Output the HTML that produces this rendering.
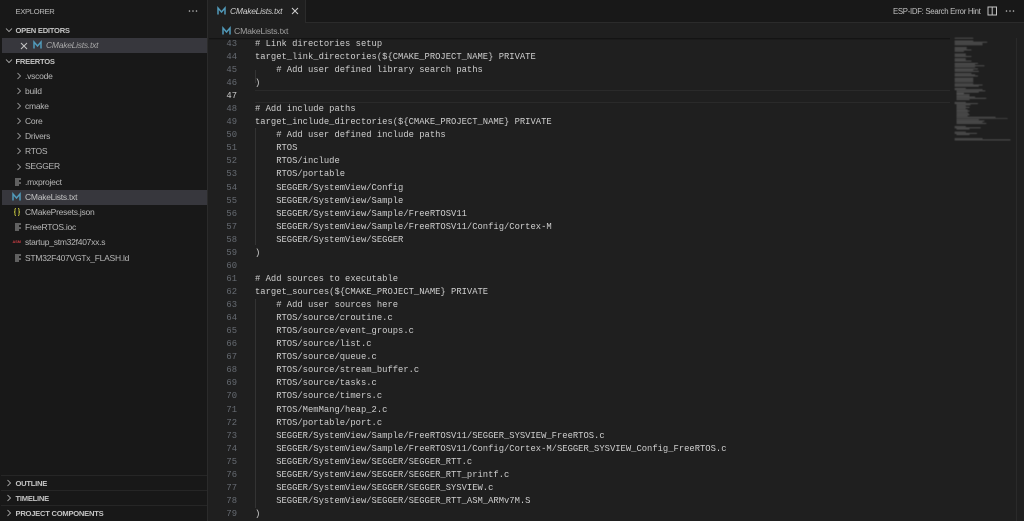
<!DOCTYPE html>
<html><head><meta charset="utf-8">
<style>
html,body{margin:0;padding:0;width:1024px;height:521px;overflow:hidden;background:#1f1f1f}
body{position:relative;font-family:"Liberation Sans",sans-serif;color:#ccc}
.a{position:absolute;white-space:pre}
#side{position:absolute;left:0;top:0;width:208px;height:521px;background:#181818;border-right:1px solid #2b2b2b;box-sizing:border-box}
.r{position:absolute;font-size:8.5px;letter-spacing:-.25px;line-height:15px;height:15px;color:#b8b8b8;white-space:pre}
.h{position:absolute;left:15.5px;font-size:7.6px;letter-spacing:-.25px;font-weight:bold;line-height:15px;height:15px;color:#c4c4c4;white-space:pre}
svg.i{position:absolute;overflow:visible}
#code{position:absolute;left:209px;top:38.4px;width:815px;height:483px;overflow:hidden}
.l{position:absolute;left:46px;font-family:"Liberation Mono",monospace;font-size:8.83px;line-height:13px;height:13px;color:#cfcfcf;white-space:pre;transform:scaleY(1.08);transform-origin:0 50%}
.n{position:absolute;left:0;width:28px;text-align:right;font-family:"Liberation Mono",monospace;font-size:8.83px;line-height:13px;height:13px;color:#666b72}
</style></head><body>
<div id="side">
<div class="a" style="left:15.5px;top:3.5px;font-size:7.600px;letter-spacing:-.3px;line-height:15px;color:#bbb">EXPLORER</div>
<svg class="i" style="left:188px;top:10px" width="10" height="3"><circle cx="1.5" cy="1" r=".8" fill="#bbb"/><circle cx="5" cy="1" r=".8" fill="#bbb"/><circle cx="8.5" cy="1" r=".8" fill="#bbb"/></svg>
<svg class="i" style="left:5px;top:27px" width="8" height="6"><path d="M1 1.5L4 4.500L7 1.500" fill="none" stroke="#bbb" stroke-width=".8"/></svg>
<div class="h" style="top:23px">OPEN EDITORS</div>
<div class="a" style="left:2px;top:38px;width:205px;height:15px;background:#37373d"></div>
<svg class="i" style="left:20px;top:42px" width="8" height="8"><path d="M1 1L7 7M7 1L1 7" stroke="#c5c5c5" stroke-width="1"/></svg>
<svg class="i" style="left:33px;top:41px" width="9" height="8"><path d="M1 7.500V1L4.500 5L8 1V7.500" fill="none" stroke="#519aba" stroke-width="1.500"/></svg>
<div class="r" style="left:46px;top:38px;font-style:italic;color:#a8a8a8">CMakeLists.txt</div>
<svg class="i" style="left:5px;top:58px" width="8" height="6"><path d="M1 1.500L4 4.500L7 1.500" fill="none" stroke="#bbb" stroke-width=".8"/></svg>
<div class="h" style="top:53.500px">FREERTOS</div>

<svg class="i" style="left:15.500px;top:72px" width="6" height="8"><path d="M1.500 1L4.500 4L1.500 7" fill="none" stroke="#aaa" stroke-width=".8"/></svg><div class="r" style="left:25px;top:69px">.vscode</div>
<svg class="i" style="left:15.500px;top:87px" width="6" height="8"><path d="M1.500 1L4.500 4L1.500 7" fill="none" stroke="#aaa" stroke-width=".8"/></svg><div class="r" style="left:25px;top:84px">build</div>
<svg class="i" style="left:15.500px;top:102px" width="6" height="8"><path d="M1.500 1L4.500 4L1.500 7" fill="none" stroke="#aaa" stroke-width=".8"/></svg><div class="r" style="left:25px;top:99px">cmake</div>
<svg class="i" style="left:15.500px;top:117px" width="6" height="8"><path d="M1.500 1L4.500 4L1.500 7" fill="none" stroke="#aaa" stroke-width=".8"/></svg><div class="r" style="left:25px;top:114px">Core</div>
<svg class="i" style="left:15.500px;top:132px" width="6" height="8"><path d="M1.500 1L4.500 4L1.500 7" fill="none" stroke="#aaa" stroke-width=".8"/></svg><div class="r" style="left:25px;top:129px">Drivers</div>
<svg class="i" style="left:15.500px;top:147px" width="6" height="8"><path d="M1.500 1L4.500 4L1.500 7" fill="none" stroke="#aaa" stroke-width=".8"/></svg><div class="r" style="left:25px;top:144px">RTOS</div>
<svg class="i" style="left:15.500px;top:163px" width="6" height="8"><path d="M1.500 1L4.500 4L1.500 7" fill="none" stroke="#aaa" stroke-width=".8"/></svg><div class="r" style="left:25px;top:159px">SEGGER</div>

<svg class="i" style="left:15px;top:178px" width="6" height="8"><path d="M0 1H6M0 3H4M0 5H6M0 7H4" stroke="#a9a9a9" stroke-width="1"/></svg><div class="r" style="left:25px;top:175px">.mxproject</div>
<div class="a" style="left:2px;top:189.500px;width:205px;height:15px;background:#37373d"></div>
<svg class="i" style="left:12px;top:193px" width="9" height="8"><path d="M1 7.500V1L4.500 5L8 1V7.500" fill="none" stroke="#519aba" stroke-width="1.500"/></svg><div class="r" style="left:25px;top:190px;color:#c4c4c4">CMakeLists.txt</div>
<svg class="i" style="left:13px;top:208px" width="8" height="8"><path d="M3 .5C1.500 .5 2 2 2 3S1 4 1 4S2 4 2 5S1.500 7.500 3 7.500M5 .5C6.500 .5 6 2 6 3S7 4 7 4S6 4 6 5S6.500 7.500 5 7.500" fill="none" stroke="#cbcb41" stroke-width=".9"/></svg><div class="r" style="left:25px;top:205px">CMakePresets.json</div>
<svg class="i" style="left:15px;top:223px" width="6" height="8"><path d="M0 1H6M0 3H4M0 5H6M0 7H4" stroke="#a9a9a9" stroke-width="1"/></svg><div class="r" style="left:25px;top:220px">FreeRTOS.ioc</div>
<div class="a" style="left:12.500px;top:239.500px;font-size:3.800px;line-height:5px;font-weight:bold;color:#cc3e44">ASM</div><div class="r" style="left:25px;top:235px">startup_stm32f407xx.s</div>
<svg class="i" style="left:15px;top:253.500px" width="6" height="8"><path d="M0 1H6M0 3H4M0 5H6M0 7H4" stroke="#a9a9a9" stroke-width="1"/></svg><div class="r" style="left:25px;top:250.500px">STM32F407VGTx_FLASH.ld</div>

<div class="a" style="left:1px;top:475px;width:206px;height:1px;background:#262626"></div>
<div class="a" style="left:1px;top:490px;width:206px;height:1px;background:#262626"></div>
<div class="a" style="left:1px;top:505px;width:206px;height:1px;background:#262626"></div>
<svg class="i" style="left:6px;top:479px" width="6" height="8"><path d="M1.500 1L4.500 4L1.500 7" fill="none" stroke="#bbb" stroke-width=".8"/></svg><div class="h" style="top:476px">OUTLINE</div>
<svg class="i" style="left:6px;top:494px" width="6" height="8"><path d="M1.500 1L4.500 4L1.500 7" fill="none" stroke="#bbb" stroke-width=".8"/></svg><div class="h" style="top:491px">TIMELINE</div>
<svg class="i" style="left:6px;top:509px" width="6" height="8"><path d="M1.500 1L4.500 4L1.500 7" fill="none" stroke="#bbb" stroke-width=".8"/></svg><div class="h" style="top:506px">PROJECT COMPONENTS</div>
</div>

<div class="a" style="left:208px;top:0;width:816px;height:22px;background:#181818;border-bottom:1px solid #2b2b2b"></div>
<div class="a" style="left:208px;top:0;width:98px;height:23px;background:#1f1f1f;border-right:1px solid #2b2b2b;box-sizing:border-box"></div>
<svg class="i" style="left:217px;top:7px" width="9" height="8"><path d="M1 7.500V1L4.500 5L8 1V7.500" fill="none" stroke="#519aba" stroke-width="1.500"/></svg>
<div class="a" style="left:230px;top:3.500px;font-size:8.500px;letter-spacing:-.25px;line-height:15px;font-style:italic;color:#d0d0d0">CMakeLists.txt</div>
<svg class="i" style="left:291px;top:7px" width="8" height="8"><path d="M1 1L7 7M7 1L1 7" stroke="#d0d0d0" stroke-width="1"/></svg>
<svg class="i" style="left:222px;top:27px" width="9" height="8"><path d="M1 7.500V1L4.500 5L8 1V7.500" fill="none" stroke="#519aba" stroke-width="1.500"/></svg>
<div class="a" style="left:234px;top:23.500px;font-size:8.700px;letter-spacing:-.2px;line-height:15px;color:#a0a0a0">CMakeLists.txt</div>
<div class="a" style="left:893px;top:3.500px;font-size:7.800px;letter-spacing:-.3px;line-height:15px;color:#c0c0c0">ESP-IDF: Search Error Hint</div>
<svg class="i" style="left:987px;top:6px" width="11" height="10"><rect x="1" y="1" width="8.500" height="8" fill="none" stroke="#c5c5c5" stroke-width="1"/><path d="M5.200 1V9" stroke="#c5c5c5" stroke-width="1"/></svg>
<svg class="i" style="left:1005px;top:10px" width="10" height="3"><circle cx="1.500" cy="1" r=".8" fill="#bbb"/><circle cx="5" cy="1" r=".8" fill="#bbb"/><circle cx="8.500" cy="1" r=".8" fill="#bbb"/></svg>

<div id="code">
<div class="a" style="left:46px;top:52px;width:695px;height:11px;border-top:1px solid #2a2a2a;border-bottom:1px solid #2a2a2a"></div>
<div class="a" style="left:46px;top:32px;width:1px;height:13px;background:#333"></div>
<div class="a" style="left:46px;top:90px;width:1px;height:117px;background:#333"></div>
<div class="a" style="left:46px;top:261px;width:1px;height:209px;background:#333"></div>
<div class="a" style="left:0;top:0;width:741px;height:2px;background:linear-gradient(#111,#1f1f1f)"></div>

<div class="n" style="top:-.5px">43</div><div class="l" style="top:-.5px"># Link directories setup</div>
<div class="n" style="top:12.600px">44</div><div class="l" style="top:12.600px">target_link_directories(${CMAKE_PROJECT_NAME} PRIVATE</div>
<div class="n" style="top:25.600px">45</div><div class="l" style="top:25.600px">    # Add user defined library search paths</div>
<div class="n" style="top:38.700px">46</div><div class="l" style="top:38.700px">)</div>
<div class="n" style="top:51.700px;color:#ccc">47</div>
<div class="n" style="top:64.800px">48</div><div class="l" style="top:64.800px"># Add include paths</div>
<div class="n" style="top:77.900px">49</div><div class="l" style="top:77.900px">target_include_directories(${CMAKE_PROJECT_NAME} PRIVATE</div>
<div class="n" style="top:90.900px">50</div><div class="l" style="top:90.900px">    # Add user defined include paths</div>
<div class="n" style="top:104px">51</div><div class="l" style="top:104px">    RTOS</div>
<div class="n" style="top:117px">52</div><div class="l" style="top:117px">    RTOS/include</div>
<div class="n" style="top:130.100px">53</div><div class="l" style="top:130.100px">    RTOS/portable</div>
<div class="n" style="top:143.200px">54</div><div class="l" style="top:143.200px">    SEGGER/SystemView/Config</div>
<div class="n" style="top:156.200px">55</div><div class="l" style="top:156.200px">    SEGGER/SystemView/Sample</div>
<div class="n" style="top:169.300px">56</div><div class="l" style="top:169.300px">    SEGGER/SystemView/Sample/FreeRTOSV11</div>
<div class="n" style="top:182.300px">57</div><div class="l" style="top:182.300px">    SEGGER/SystemView/Sample/FreeRTOSV11/Config/Cortex-M</div>
<div class="n" style="top:195.400px">58</div><div class="l" style="top:195.400px">    SEGGER/SystemView/SEGGER</div>
<div class="n" style="top:208.500px">59</div><div class="l" style="top:208.500px">)</div>
<div class="n" style="top:221.500px">60</div>
<div class="n" style="top:234.600px">61</div><div class="l" style="top:234.600px"># Add sources to executable</div>
<div class="n" style="top:247.600px">62</div><div class="l" style="top:247.600px">target_sources(${CMAKE_PROJECT_NAME} PRIVATE</div>
<div class="n" style="top:260.700px">63</div><div class="l" style="top:260.700px">    # Add user sources here</div>
<div class="n" style="top:273.800px">64</div><div class="l" style="top:273.800px">    RTOS/source/croutine.c</div>
<div class="n" style="top:286.800px">65</div><div class="l" style="top:286.800px">    RTOS/source/event_groups.c</div>
<div class="n" style="top:299.900px">66</div><div class="l" style="top:299.900px">    RTOS/source/list.c</div>
<div class="n" style="top:312.900px">67</div><div class="l" style="top:312.900px">    RTOS/source/queue.c</div>
<div class="n" style="top:326px">68</div><div class="l" style="top:326px">    RTOS/source/stream_buffer.c</div>
<div class="n" style="top:339.100px">69</div><div class="l" style="top:339.100px">    RTOS/source/tasks.c</div>
<div class="n" style="top:352.100px">70</div><div class="l" style="top:352.100px">    RTOS/source/timers.c</div>
<div class="n" style="top:365.200px">71</div><div class="l" style="top:365.200px">    RTOS/MemMang/heap_2.c</div>
<div class="n" style="top:378.200px">72</div><div class="l" style="top:378.200px">    RTOS/portable/port.c</div>
<div class="n" style="top:391.300px">73</div><div class="l" style="top:391.300px">    SEGGER/SystemView/Sample/FreeRTOSV11/SEGGER_SYSVIEW_FreeRTOS.c</div>
<div class="n" style="top:404.400px">74</div><div class="l" style="top:404.400px">    SEGGER/SystemView/Sample/FreeRTOSV11/Config/Cortex-M/SEGGER_SYSVIEW_Config_FreeRTOS.c</div>
<div class="n" style="top:417.400px">75</div><div class="l" style="top:417.400px">    SEGGER/SystemView/SEGGER/SEGGER_RTT.c</div>
<div class="n" style="top:430.500px">76</div><div class="l" style="top:430.500px">    SEGGER/SystemView/SEGGER/SEGGER_RTT_printf.c</div>
<div class="n" style="top:443.500px">77</div><div class="l" style="top:443.500px">    SEGGER/SystemView/SEGGER/SEGGER_SYSVIEW.c</div>
<div class="n" style="top:456.600px">78</div><div class="l" style="top:456.600px">    SEGGER/SystemView/SEGGER/SEGGER_RTT_ASM_ARMv7M.S</div>
<div class="n" style="top:469.700px">79</div><div class="l" style="top:469.700px">)</div>
</div>

<svg class="i" style="left:950px;top:36px;filter:blur(.45px);transform:scale(.93);transform-origin:0 0" width="66" height="112" fill="#606060">
<rect x="5" y="2" width="20" height=".8"/>
<rect x="5" y="5" width="20" height=".8"/><rect x="5" y="6.300" width="35" height=".8"/><rect x="5" y="7.600" width="30" height=".8"/><rect x="5" y="9" width="30" height=".8"/>
<rect x="5" y="12" width="13" height=".8"/><rect x="5" y="13.300" width="13" height=".8"/><rect x="5" y="14.600" width="18" height=".8"/><rect x="5" y="16" width="10" height=".8"/>
<rect x="5" y="19" width="12" height=".8"/><rect x="5" y="20.300" width="12" height=".8"/><rect x="5" y="21.600" width="18" height=".8"/>
<rect x="5" y="24" width="12" height=".8"/><rect x="5" y="25.300" width="12" height=".8"/><rect x="5" y="26.600" width="18" height=".8"/>
<rect x="5" y="29" width="25" height=".8"/><rect x="5" y="30.300" width="22" height=".8"/><rect x="5" y="31.600" width="32" height=".8"/><rect x="5" y="33" width="22" height=".8"/>
<rect x="5" y="35" width="25" height=".8"/><rect x="5" y="36.300" width="20" height=".8"/><rect x="5" y="37.600" width="26" height=".8"/>
<rect x="5" y="40" width="18" height=".8"/><rect x="5" y="41.300" width="22" height=".8"/><rect x="5" y="42.600" width="25" height=".8"/>
<rect x="5" y="45" width="20" height=".8"/><rect x="5" y="46.300" width="20" height=".8"/><rect x="5" y="47.600" width="20" height=".8"/><rect x="5" y="49" width="20" height=".8"/>
<rect x="5" y="51" width="20" height=".8"/><rect x="5" y="52.300" width="30" height=".8"/><rect x="5" y="53.600" width="26" height=".8"/>
<rect x="5" y="56" width="12" height=".8"/><rect x="5" y="57.300" width="30" height=".8"/><rect x="7" y="58.600" width="31" height=".8"/><rect x="7" y="60" width="24" height=".8"/>
<rect x="7" y="61.300" width="8" height="1"/><rect x="7" y="62.600" width="14" height=".8"/><rect x="7" y="64" width="14" height=".8"/><rect x="7" y="65.300" width="20" height=".8"/><rect x="7" y="66.600" width="32" height=".8"/><rect x="7" y="68" width="14" height=".8"/>
<rect x="5" y="71" width="12" height=".8"/><rect x="5" y="72.300" width="25" height=".8"/><rect x="7" y="73.600" width="15" height=".8"/><rect x="7" y="75" width="10" height=".8"/><rect x="7" y="76.300" width="14" height=".8"/><rect x="7" y="77.600" width="10" height=".8"/><rect x="7" y="79" width="12" height=".8"/><rect x="7" y="80.300" width="14" height=".8"/><rect x="7" y="81.600" width="12" height=".8"/><rect x="7" y="83" width="13" height=".8"/><rect x="7" y="84.300" width="14" height=".8"/><rect x="7" y="85.600" width="12" height=".8"/>
<rect x="7" y="87" width="42" height=".8"/><rect x="7" y="88.300" width="55" height=".8" opacity=".7"/><rect x="7" y="89.600" width="24" height=".8"/><rect x="7" y="91" width="30" height=".8"/><rect x="7" y="92.300" width="28" height=".8"/><rect x="7" y="93.600" width="32" height=".8"/>
<rect x="5" y="97" width="12" height=".8"/><rect x="5" y="98.300" width="28" height=".8"/><rect x="7" y="99.600" width="14" height=".8"/>
<rect x="5" y="103" width="12" height=".8"/><rect x="5" y="104.300" width="24" height=".8"/><rect x="7" y="105.600" width="14" height=".8"/>
<rect x="5" y="110" width="30" height=".8"/><rect x="5" y="111.300" width="60" height=".8"/>
</svg>
<div class="a" style="left:1016px;top:38px;width:1px;height:483px;background:#2a2a2a"></div>
</body></html>
